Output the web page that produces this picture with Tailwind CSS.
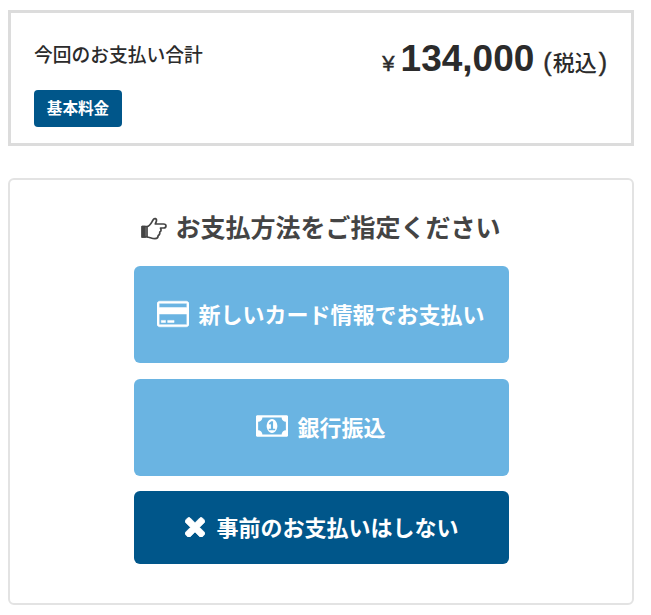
<!DOCTYPE html>
<html lang="ja">
<head>
  <meta charset="UTF-8">
  <meta name="viewport" content="width=device-width, initial-scale=1.0">
  <script src="https://cdn.jsdelivr.net/npm/@tailwindcss/browser@4"></script>
  <title>お支払い方法</title>
</head>
<body class="bg-white pl-2 pt-[10px] font-['Liberation_Sans','Noto_Sans_CJK_JP',sans-serif] text-[#2b2b2b]">

  <!-- Total -->
  <section class="w-[626px] h-[136px] border-3 border-[#dcdcdc] pl-[23px] pr-[24px] flex justify-between">
    <div class="pt-[29px]">
      <h2 class="text-[18.75px] leading-[28px] font-medium">今回のお支払い合計</h2>
      <span class="mt-[20px] flex w-[88px] h-[37px] items-center justify-center rounded-[4px] bg-[#00568a] text-[15.6px] font-bold text-white">基本料金</span>
    </div>
    <p class="pt-[24px] flex items-baseline leading-[44px] whitespace-nowrap">
      <span class="text-[22px] font-medium mr-[6px] [-webkit-text-stroke:0.5px_currentColor]">¥</span>
      <span class="text-[37px] font-bold mr-[9px]">134,000</span>
      <span class="text-[22px] font-medium"><span class="text-[25px] mr-px [-webkit-text-stroke:0.4px_currentColor]">(</span>税込<span class="text-[25px] ml-[2px] [-webkit-text-stroke:0.4px_currentColor]">)</span></span>
    </p>
  </section>

  <!-- Payment method -->
  <section class="mt-[32px] w-[626px] h-[427px] border-2 border-[#e3e3e3] rounded-[6px] flex flex-col items-center">
    <h3 class="mt-[30px] h-[36px] flex items-center gap-[8px] text-[25px] leading-[36px] font-bold text-[#444] whitespace-nowrap">
      <svg class="w-[26px] h-[24px]" viewBox="0 0 26 24" fill="none" stroke="currentColor" stroke-width="1.7" stroke-linejoin="round">
        <path d="M6 10.5C9 10.2 10.5 6.5 12 4C13.2 1.6 16 2.4 15.4 5C15.1 6.3 14.5 7.2 14.3 8H22.5C25.8 8 25.8 12 22.5 12H19.5C20.5 14 20 15.5 18.8 16C19 18 18.4 19 17.2 19.5C17.2 21.8 16 22.6 14 22.6C10.5 22.6 8.5 21 6 21" />
        <path d="M1.2 10.5H6V21H1.2Z" />
        <path d="M1.2 10.5H4V21H1.2Z" fill="currentColor" />
      </svg>
      お支払方法をご指定ください
    </h3>
    <div class="mt-[20px] w-[375px] flex flex-col gap-4 text-[22px] font-bold text-white whitespace-nowrap">
      <button class="h-[97px] rounded-[6px] bg-[#6ab4e2] flex items-center justify-center gap-[9px]">
        <svg class="w-[32px] h-[30px] mb-[2px]" viewBox="0 0 1920 1792" fill="currentColor" stroke="currentColor" stroke-width="30"><path d="M1760 128q66 0 113 47t47 113v1216q0 66-47 113t-113 47h-1600q-66 0-113-47t-47-113v-1216q0-66 47-113t113-47h1600zm-1600 128q-13 0-22.5 9.5t-9.5 22.5v224h1664v-224q0-13-9.5-22.5t-22.5-9.5h-1600zm1600 1280q13 0 22.5-9.5t9.5-22.5v-608h-1664v608q0 13 9.5 22.5t22.5 9.5h1600zm-1504-128v-128h256v128h-256zm384 0v-128h384v128h-384z" /></svg>
        <span class="pt-px">新しいカード情報でお支払い</span>
      </button>
      <button class="h-[97px] rounded-[6px] bg-[#6ab4e2] flex items-center justify-center gap-[9px]">
        <svg class="w-[32px] h-[30px] mb-[3px]" viewBox="0 0 1920 1792" fill="currentColor"><path d="M768 1152h384v-96h-128v-448h-114l-148 137 77 80q42-37 55-57h2v288h-128v96zm512-256q0 70-21 142t-59.5 134-101.5 101-138 39-138-39-101.5-101-59.5-134-21-142 21-142 59.5-134 101.5-101 138-39 138 39 101.5 101 59.5 134 21 142zm512 256v-512q-106 0-181-75t-75-181h-1152q0 106-75 181t-181 75v512q106 0 181 75t75 181h1152q0-106 75-181t181-75zm128-832v1152q0 26-19 45t-45 19h-1792q-26 0-45-19t-19-45v-1152q0-26 19-45t45-19h1792q26 0 45 19t19 45z" /></svg>
        <span class="pt-px">銀行振込</span>
      </button>
      <button class="-mt-px h-[73px] rounded-[6px] bg-[#00568a] flex items-center justify-center gap-[11px] pl-[2px]">
        <svg class="w-[20px] h-[20px] mb-[2px]" viewBox="302 344 1188 1188" fill="currentColor" stroke="currentColor" stroke-width="40"><path d="M1490 1322q0 40-28 68l-136 136q-28 28-68 28t-68-28l-294-294-294 294q-28 28-68 28t-68-28l-136-136q-28-28-28-68t28-68l294-294-294-294q-28-28-28-68t28-68l136-136q28-28 68-28t68 28l294 294 294-294q28-28 68-28t68 28l136 136q28 28 28 68t-28 68l-294 294 294 294q28 28 28 68z" /></svg>
        <span class="pt-px">事前のお支払いはしない</span>
      </button>
    </div>
  </section>

</body>
</html>
